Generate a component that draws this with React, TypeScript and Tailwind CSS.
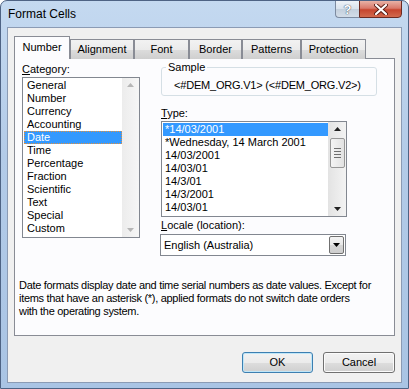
import React from 'react';

const categories = ['General', 'Number', 'Currency', 'Accounting', 'Date', 'Time', 'Percentage', 'Fraction', 'Scientific', 'Text', 'Special', 'Custom'];
const types = ['*14/03/2001', '*Wednesday, 14 March 2001', '14/03/2001', '14/03/01', '14/3/01', '14/3/2001', '14/03/01'];
const tabs = [
  { label: 'Alignment', w: 'w-[64px]' },
  { label: 'Font', w: 'w-[55px]' },
  { label: 'Border', w: 'w-[53px]' },
  { label: 'Patterns', w: 'w-[59px]' },
  { label: 'Protection', w: 'w-[65px]' },
];

const Arrow = ({ up, color }: { up?: boolean; color: string }) => (
  <svg width="7" height="4" viewBox="0 0 7 4">
    <path d={up ? 'M0 4 L3.5 0 L7 4 Z' : 'M0 0 L3.5 4 L7 0 Z'} fill={color} />
  </svg>
);

const App: React.FC = () => {
  return (
    <div className="w-[409px] h-[389px] flex flex-col overflow-hidden rounded-t-[7px] border border-[#4e6384] bg-[linear-gradient(to_bottom,#c4d9f0_0%,#b3cbe8_40%,#a9c4e4_100%)] font-['Liberation_Sans',Arial,sans-serif] text-[11px] leading-[13px] text-black">
      {/* title bar */}
      <div className="h-[26px] flex items-start shrink-0">
        <span className="pl-[7px] pt-[6px] text-[12px] leading-[14px] text-black">Format Cells</span>
        <div className="ml-auto mr-[6px] flex -mt-px">
          <div className="w-[24px] h-[18px] rounded-bl-[4px] border border-[#7d8ba0] border-r-0 bg-[linear-gradient(to_bottom,#eef2f7_0%,#d9e2ec_50%,#c3cfdc_51%,#d3dde8_100%)] flex items-center justify-center">
            <span className="text-[13px] leading-[13px] font-bold text-white [text-shadow:0_0_1px_#3b4a5e,0_0_1px_#3b4a5e]">?</span>
          </div>
          <div className="w-[43px] h-[18px] rounded-br-[4px] border border-[#6b2a22] bg-[linear-gradient(to_bottom,#e8b2a6_0%,#d9796a_45%,#c6452e_55%,#d26a4e_100%)] flex items-center justify-center">
            <svg width="14" height="11" viewBox="0 0 14 11">
              <path d="M2 1 L12 10 M12 1 L2 10" stroke="#5a1d14" strokeWidth="4" strokeLinecap="round" />
              <path d="M2 1 L12 10 M12 1 L2 10" stroke="#ffffff" strokeWidth="2.2" strokeLinecap="round" />
            </svg>
          </div>
        </div>
      </div>

      {/* client area */}
      <div className="mx-[6px] h-[356px] border border-[#8b9bb4] bg-[#f0f0f0] flex flex-col">
        <div className="pl-[6px] pt-[8px] flex items-end relative z-10 -mb-px">
          <div className="w-[56px] h-[23px] border border-b-0 border-[#898c95] bg-[#fcfcfe] flex justify-center pt-[4px]">
            Number
          </div>
          {tabs.map(t => (
            <div
              key={t.label}
              className={`${t.w} h-[20px] border border-b-0 border-[#898c95] bg-[linear-gradient(to_bottom,#f2f2f2_0%,#ebebeb_50%,#dddddd_51%,#cfcfcf_100%)] flex justify-center pt-[3px]`}
            >
              {t.label}
            </div>
          ))}
        </div>

        {/* tab panel */}
        <div className="ml-[6px] w-[381px] h-[278px] border border-[#898c95] bg-[#fcfcfe] flex flex-col">
          <div className="flex pt-[2px]">
            {/* left column */}
            <div className="pl-[7px] pt-[2px] flex flex-col">
              <span><span className="underline">C</span>ategory:</span>
              <div className="mt-[1px] w-[118px] h-[161px] border border-[#828790] bg-white flex">
                <div className="flex-1 pt-px pl-px">
                  {categories.map(c => (
                    <div
                      key={c}
                      className={c === 'Date'
                        ? 'h-[13px] pl-[2px] bg-[#3399ff] text-white border border-dotted border-[#e3913d] leading-[11px]'
                        : 'h-[13px] pl-[3px]'}
                    >
                      {c}
                    </div>
                  ))}
                </div>
                <div className="w-[17px] bg-[linear-gradient(to_right,#ececec,#f6f6f6)] flex flex-col items-center justify-between py-[5px]">
                  <Arrow up color="#b6b6b6" />
                  <Arrow color="#b6b6b6" />
                </div>
              </div>
            </div>

            {/* right column */}
            <div className="ml-[21px] flex flex-col">
              <fieldset className="w-[216px] h-[35px] border border-[#d5dfe5] rounded-[3px] px-[12px]">
                <legend className="ml-[-8px] px-[2px] text-[11px] leading-[13px]">Sample</legend>
                <div className="pt-[5px] whitespace-nowrap tracking-[-0.2px]">&lt;#DEM_ORG.V1&gt; (&lt;#DEM_ORG.V2&gt;)</div>
              </fieldset>
              <span className="mt-[11px]"><span className="underline">T</span>ype:</span>
              <div className="mt-[1px] w-[186px] h-[96px] border border-[#828790] bg-white flex">
                <div className="flex-1 pt-px pl-px">
                  {types.map((t, i) => (
                    <div key={i} className={i === 0 ? 'h-[13px] pl-[2px] bg-[#3399ff] text-white' : 'h-[13px] pl-[2px]'}>
                      {t}
                    </div>
                  ))}
                </div>
                <div className="w-[18px] bg-[linear-gradient(to_right,#e3e3e3,#f3f3f3)] flex flex-col items-center pt-[5px] pb-[5px]">
                  <Arrow up color="#222222" />
                  <div className="mt-[7px] w-[15px] h-[30px] rounded-[2px] border border-[#979797] bg-[linear-gradient(to_right,#f4f4f4,#e2e2e2)] flex flex-col items-center justify-center gap-[2px]">
                    <div className="w-[7px] h-px bg-[#6f6f6f]" />
                    <div className="w-[7px] h-px bg-[#6f6f6f]" />
                    <div className="w-[7px] h-px bg-[#6f6f6f]" />
                    <div className="w-[7px] h-px bg-[#6f6f6f]" />
                  </div>
                  <div className="mt-auto">
                    <Arrow color="#222222" />
                  </div>
                </div>
              </div>
              <span className="mt-[2px]"><span className="underline">L</span>ocale (location):</span>
              <div className="mt-[2px] -ml-px w-[186px] h-[22px] border border-[#828790] bg-white flex items-center">
                <span className="flex-1 pl-[3px]">English (Australia)</span>
                <div className="mr-px w-[15px] h-[18px] rounded-[2px] border border-[#707070] bg-[linear-gradient(to_bottom,#f4f4f4_0%,#e8e8e8_50%,#d6d6d6_51%,#cecece_100%)] flex items-center justify-center">
                  <Arrow color="#000000" />
                </div>
              </div>
            </div>
          </div>

          <p className="mt-[23px] pl-[4px] whitespace-nowrap tracking-[-0.3px]">
            Date formats display date and time serial numbers as date values. Except for<br />
            items that have an asterisk (*), applied formats do not switch date orders<br />
            with the operating system.
          </p>
        </div>

        {/* buttons */}
        <div className="mt-[16px] ml-[234px] flex gap-[10px]">
          <button className="w-[71px] h-[21px] rounded-[3px] border border-[#3c7fb1] shadow-[inset_0_0_0_1px_#bfe6f8] bg-[linear-gradient(to_bottom,#f2f2f2_0%,#ebebeb_50%,#dddddd_51%,#cfcfcf_100%)] text-[11px] leading-[13px]">
            OK
          </button>
          <button className="w-[72px] h-[21px] rounded-[3px] border border-[#707070] shadow-[inset_0_0_0_1px_#fbfbfb] bg-[linear-gradient(to_bottom,#f2f2f2_0%,#ebebeb_50%,#dddddd_51%,#cfcfcf_100%)] text-[11px] leading-[13px]">
            Cancel
          </button>
        </div>
      </div>
    </div>
  );
};

export default App;
